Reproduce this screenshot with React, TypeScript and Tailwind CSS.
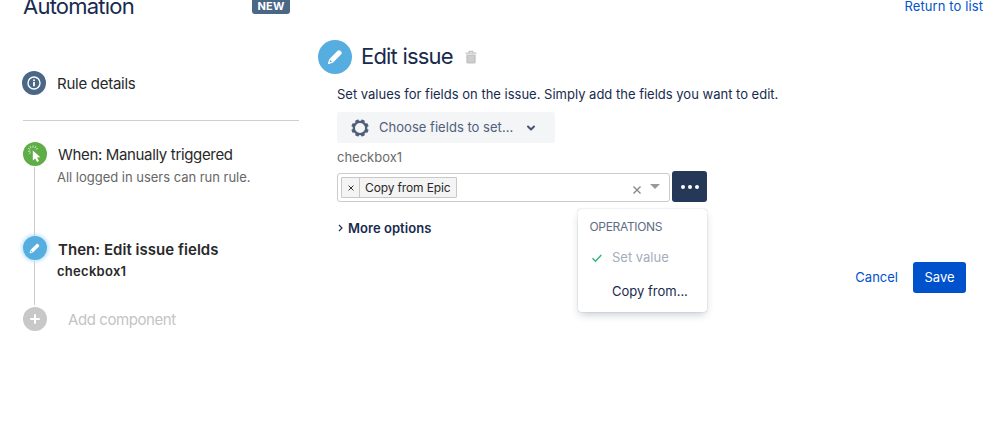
import type { ReactNode } from 'react';

function Pencil({ className }: { className: string }) {
  return (
    <svg viewBox="0 0 20 20" className={className} fill="currentColor" aria-hidden="true">
      <path fillRule="evenodd" d="M13.3 2.3c1-1 2.3-1 3.3-.1l1.2 1.2c1 1 1 2.3 0 3.3L7.6 16.9l-5 1.9c-.9.3-1.7-.5-1.4-1.4l1.9-5zM4.4 13.6l-1.2 3.2 3.2-1.2z" />
    </svg>
  );
}

function Info() {
  return (
    <svg viewBox="0 0 14 14" className="size-3.5" fill="none" stroke="white" aria-hidden="true">
      <circle cx="7" cy="7" r="6" strokeWidth="1.4" />
      <path d="M7 6v4.3" strokeWidth="1.8" />
      <circle cx="7" cy="4.2" r="1" fill="white" stroke="none" />
    </svg>
  );
}

function ClickCursor() {
  return (
    <svg viewBox="0 0 24 24" className="size-6" aria-hidden="true">
      <path d="M9.8 8.6l7.6 6.7-3.3.3 1.9 3.3-1.9 1-1.9-3.5-2.4 2.2z" fill="white" />
      <g stroke="white" strokeWidth=".8" strokeLinecap="round" opacity=".85">
        <path d="M10 5.4V3.8M7.9 5.8l-.8-1.5M6.9 7.3l-1.5-.8M7 9.2H5.4M7.4 10.7l-1 .8M12 5.8l.8-1.5M13.1 7.3l1.4-.8" />
      </g>
    </svg>
  );
}

function Trash() {
  return (
    <svg viewBox="0 0 12 14" className="h-3.5 w-3" aria-hidden="true">
      <path d="M1.3 4.5h9.4V12c0 .9-.6 1.5-1.5 1.5H2.8c-.9 0-1.5-.6-1.5-1.5z" fill="#c4c4c4" />
      <path d="M.5 3.2h11M4.1 2.7v-1.3h3.8v1.3" fill="none" stroke="#c4c4c4" strokeWidth="1.2" />
      <path d="M4 6v5.7M6 6v5.7M8 6v5.7" stroke="#dedede" strokeWidth=".8" />
    </svg>
  );
}

const teeth = [0, 45, 90, 135, 180, 225, 270, 315];

function Gear() {
  return (
    <svg viewBox="0 0 18 18" className="size-[18px]" aria-hidden="true">
      <circle cx="9" cy="9" r="6.2" fill="none" stroke="#505f79" strokeWidth="2.3" />
      {teeth.map((a) => (
        <rect key={a} x="7.2" y=".3" width="3.6" height="2.6" rx=".6" fill="#505f79" transform={`rotate(${a + 22.5} 9 9)`} />
      ))}
    </svg>
  );
}

function Rail({ children }: { children: ReactNode }) {
  return <div className="flex w-[25px] shrink-0 flex-col items-center">{children}</div>;
}

function Sidebar() {
  return (
    <aside className="w-[277px] shrink-0">
      <div className="flex h-[71px] justify-between">
        <h1 className="-mt-[9px] ml-px text-[22px] leading-[30px] tracking-[-0.77px] text-[#172b4d]">Automation</h1>
        <span className="mr-[9px] -mt-0.5 h-4 w-[38px] rounded-[3px] bg-[#4a6785] text-center text-[11px] font-bold leading-4 tracking-[0.2px] text-white">NEW</span>
      </div>
      <div className="flex h-6 items-center">
        <span className="flex size-6 items-center justify-center rounded-full bg-[#4a6785]"><Info /></span>
        <span className="ml-[11px] mt-0.5 text-[15px] tracking-[-0.26px]">Rule details</span>
      </div>
      <div className="ml-px mt-[25px] h-px bg-[#cfcfcf]" />
      <div className="mt-[21px] flex h-[94px]">
        <Rail>
          <span className="size-6 rounded-full bg-[#5fad46]"><ClickCursor /></span>
          <span className="mt-px w-px grow bg-[#cccccc]" />
        </Rail>
        <div className="ml-2.5">
          <div className="ml-px h-6 text-[15px] leading-[25px] tracking-[-0.34px]">When: Manually triggered</div>
          <div className="text-[13px] leading-[22px] tracking-[-0.02px] text-[#666]">All logged in users can run rule.</div>
        </div>
      </div>
      <div className="flex h-[71px]">
        <Rail>
          <span className="flex size-6 items-center justify-center rounded-full bg-[#56ade0] text-white shadow-[0_0_4px_1px_#a9daf7]"><Pencil className="size-[11px]" /></span>
          <span className="mt-px mb-0.5 w-px grow bg-[#cccccc]" />
        </Rail>
        <div className="ml-2.5 pt-px font-semibold">
          <div className="ml-px h-6 text-[15px] leading-[25px] tracking-[0.04px]">Then: Edit issue fields</div>
          <div className="text-[13px] leading-[21px] tracking-[0.28px]">checkbox1</div>
        </div>
      </div>
      <div className="flex h-6 items-center">
        <Rail>
          <span className="flex size-6 items-center justify-center rounded-full bg-[#c8c8c8]">
            <svg viewBox="0 0 10 10" className="size-2.5" aria-hidden="true"><path d="M5 1v8M1 5h8" stroke="white" strokeWidth="2" strokeLinecap="round" /></svg>
          </span>
        </Rail>
        <span className="ml-[21px] mt-0.5 text-[15px] tracking-[-0.42px] text-[#c4c4c4]">Add component</span>
      </div>
    </aside>
  );
}

function OperationsMenu() {
  return (
    <div className="absolute left-[241px] top-[36px] h-[103px] w-[129px] rounded-[3px] bg-white pt-2 shadow-[0_4px_8px_-2px_rgba(9,30,66,0.25),0_0_1px_rgba(9,30,66,0.4)]">
      <div className="pl-[11.5px] text-xs leading-[19px] tracking-[-0.32px] text-[#5e6c84]">OPERATIONS</div>
      <div className="mt-[5px] flex h-[34px] items-center pl-[13px]">
        <svg viewBox="0 0 12 12" className="h-3 w-3" fill="none" stroke="#36b37e" strokeWidth="1.5" aria-hidden="true"><path d="M1.5 6.3l3 2.9L10.3 3" /></svg>
        <span className="ml-[9px] text-[13px] text-[#a5adba]">Set value</span>
      </div>
      <div className="flex h-[34px] items-center pl-[34px] text-[13px] text-[#172b4d]">Copy from...</div>
    </div>
  );
}

function Editor() {
  return (
    <main className="ml-[19px] w-[648px] shrink-0 pt-10">
      <div className="flex h-[34px] items-center">
        <span className="flex size-[34px] items-center justify-center rounded-full bg-[#56ade0] text-white"><Pencil className="size-4" /></span>
        <h2 className="-mt-0.5 ml-[9px] mr-3 text-[22px] leading-[30px] tracking-[-0.8px] text-[#172b4d]">Edit issue</h2>
        <Trash />
      </div>
      <div className="ml-[19px]">
        <p className="mt-[9px] text-[13px] leading-[22px] text-[#172b4d]">Set values for fields on the issue. Simply add the fields you want to edit.</p>
        <button className="mt-[7px] flex h-[31px] w-[218px] items-center rounded-[3px] bg-[#f4f5f7] pl-3.5 text-[13px] text-[#505f79]">
          <Gear />
          <span className="ml-2.5 mr-[13px] tracking-[0.03px]">Choose fields to set...</span>
          <svg viewBox="0 0 10 8" className="h-2 w-2.5" fill="none" stroke="#44546f" strokeWidth="2" strokeLinecap="round" strokeLinejoin="round" aria-hidden="true"><path d="M2 2.5l3 3 3-3" /></svg>
        </button>
        <div className="mt-1 text-[13px] leading-[21px] text-[#6b6b6b]">checkbox1</div>
        <div className="relative mt-[5px] flex h-[29px] items-start">
          <div className="flex h-[29px] w-[333px] items-center rounded-[3px] border border-[#ccc] pl-[3px] pr-[9px]">
            <span className="flex h-[21px] items-center rounded-[1px] border border-[#c8c8c8] bg-[#f4f4f4] text-xs">
              <span className="flex h-full w-[18px] items-center justify-center border-r border-[#c8c8c8]">
                <svg viewBox="0 0 6 6" className="size-1.5" stroke="#333" strokeWidth="1" aria-hidden="true"><path d="M.6.6l4.8 4.8M5.4.6L.6 5.4" /></svg>
              </span>
              <span className="px-[5px] tracking-[-0.13px]">Copy from Epic</span>
            </span>
            <svg viewBox="0 0 8 8" className="ml-auto mt-[5px] size-2" stroke="#888" strokeWidth="1.4" aria-hidden="true"><path d="M.5.5l7 7M7.5.5l-7 7" /></svg>
            <svg viewBox="0 0 10 5" className="ml-[9px] mb-[3px] h-[5px] w-2.5" fill="#999" aria-hidden="true"><path d="M0 0h10L5 5z" /></svg>
          </div>
          <button className="-mt-0.5 ml-0.5 flex h-[31px] w-[35px] items-center justify-center gap-[3px] rounded-[3px] bg-[#253858]">
            <span className="size-1 rounded-full bg-white" />
            <span className="size-1 rounded-full bg-white" />
            <span className="size-1 rounded-full bg-white" />
          </button>
          <OperationsMenu />
        </div>
        <div className="mt-4 flex h-[22px] items-center text-[13px] font-semibold tracking-[0.05px] text-[#172b4d]">
          <svg viewBox="0 0 6 8" className="ml-px mb-[3px] mr-1 h-2 w-1.5" fill="none" stroke="currentColor" strokeWidth="1.1" aria-hidden="true"><path d="M1 1l3 3-3 3" /></svg>
          More options
        </div>
      </div>
      <div className="mt-[22px] flex h-[31px] items-center justify-end text-[13px]">
        <button className="mr-[15px] text-[#0052cc]">Cancel</button>
        <button className="h-[31px] w-[53px] rounded-[3px] bg-[#0052cc] text-white">Save</button>
      </div>
    </main>
  );
}

export default function App() {
  return (
    <div className="relative flex h-[444px] w-[999px] overflow-hidden bg-white pl-[22px] font-['Inter','Liberation_Sans',sans-serif] text-[#292929]">
      <Sidebar />
      <Editor />
      <a className="absolute right-4 -top-[5px] text-[13px] leading-[22px] tracking-[0.1px] text-[#0052cc]">Return to list</a>
    </div>
  );
}
